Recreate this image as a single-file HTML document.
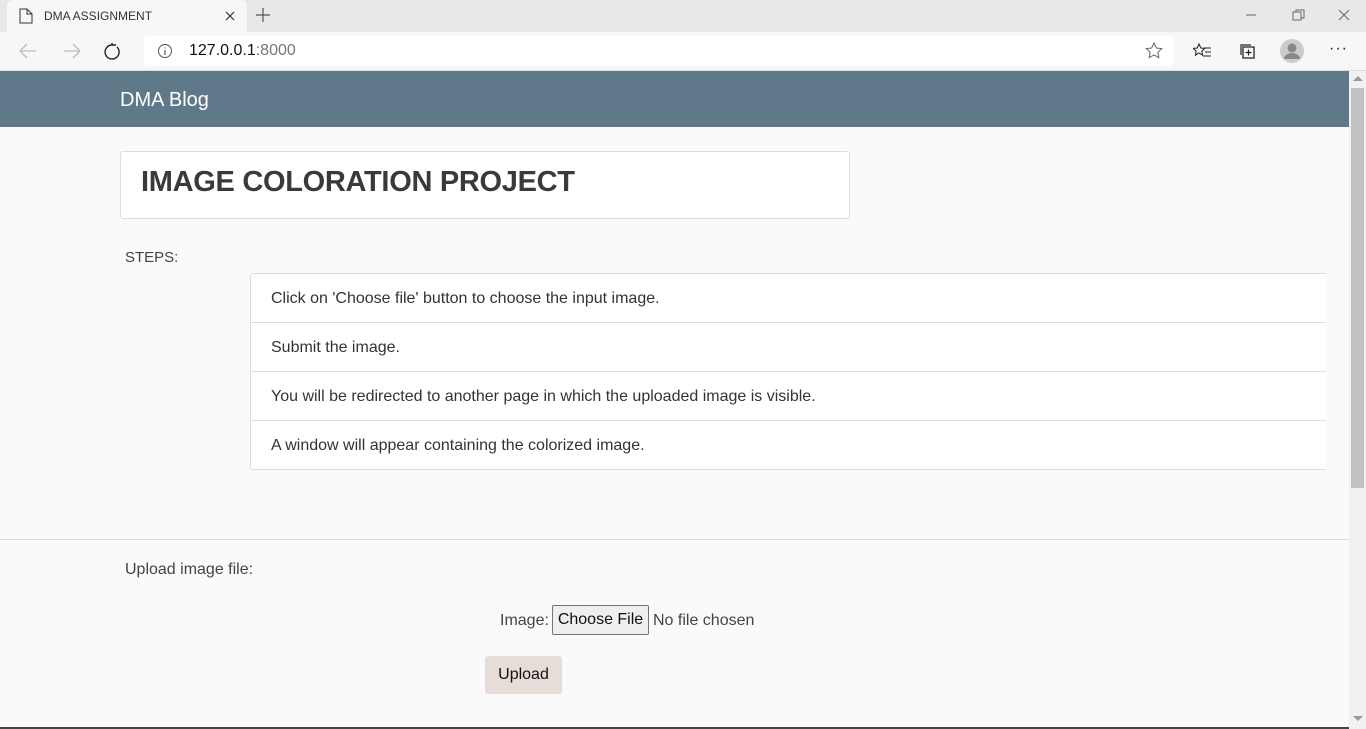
<!DOCTYPE html>
<html><head><meta charset="utf-8"><style>
*{box-sizing:border-box;margin:0;padding:0}
body{width:1366px;height:729px;overflow:hidden;background:#fafafa;font-family:"Liberation Sans",sans-serif;position:relative;color:#444}
.abs{position:absolute}
#tabbar{left:0;top:0;width:1366px;height:32px;background:#e8e8e8}
#tab{left:7px;top:0;width:240px;height:32px;background:#f7f7f7;border-radius:6px 6px 0 0}
#toolbar{left:0;top:32px;width:1366px;height:39px;background:#f7f7f7;border-bottom:1px solid #ddd}
#url{left:144px;top:36px;width:1030px;height:30px;background:#fff;border-radius:4px}
#nav{left:0;top:71px;width:1349px;height:56px;background:#5f788a}
#sb{left:1349px;top:71px;width:17px;height:658px;background:#f1f1f1}
#thumb{left:1351px;top:88px;width:13px;height:400px;background:#c1c1c1}
.t{font-size:16px}
#jumbo{left:120px;top:151px;width:730px;height:68px;background:#fff;border:1px solid #ddd;border-radius:3px}
#list{left:250px;top:273px;width:1076px;height:197px;background:#fff;border:1px solid #ddd;border-right:none;border-radius:3px 0 0 3px}
.li{height:49px;border-bottom:1px solid #ddd;padding-left:20px;line-height:50px;font-size:16px;color:#333}
.li:last-child{border-bottom:none}
</style></head><body>
<div id="tabbar" class="abs"></div>
<div id="tab" class="abs"></div>
<svg class="abs" style="left:19px;top:8px" width="14" height="16"><path d="M1 1h7l5 5v9H1z M8 1v5h5" fill="none" stroke="#333" stroke-width="1"/></svg>
<div class="abs" style="left:44px;top:9px;font-size:12px;color:#333">DMA ASSIGNMENT</div>
<svg class="abs" style="left:225px;top:11px" width="10" height="10"><path d="M1 1l8 8M9 1l-8 8" stroke="#333" stroke-width="1.2"/></svg>
<svg class="abs" style="left:256px;top:8px" width="14" height="14"><path d="M7 0v14M0 7h14" stroke="#555" stroke-width="1.2"/></svg>
<svg class="abs" style="left:1245px;top:9px" width="110" height="12"><path d="M1 6h10" stroke="#666"/><path d="M48 3h8v8h-8zM51 3v-2h8v8h-3" fill="none" stroke="#666"/><path d="M94 1l10 10M104 1l-10 10" stroke="#666"/></svg>
<div id="toolbar" class="abs"></div>
<svg class="abs" style="left:18px;top:42px" width="110" height="18"><path d="M2 9h16M2 9l7-7M2 9l7 7" fill="none" stroke="#bbb" stroke-width="1.3"/><path d="M46 9h16M62 9l-7-7M62 9l-7 7" fill="none" stroke="#bbb" stroke-width="1.3"/><path d="M94 3a7 7 0 1 0 5 2M94 3v-2M94 3h4" fill="none" stroke="#222" stroke-width="1.4"/></svg>
<div id="url" class="abs"></div>
<svg class="abs" style="left:157px;top:43px" width="16" height="16"><circle cx="8" cy="8" r="6.5" fill="none" stroke="#555"/><path d="M8 7v5M8 4.5v1" stroke="#555" stroke-width="1.2"/></svg>
<div class="abs" style="left:189px;top:42px;font-size:16px;color:#111">127.0.0.1<span style="color:#777">:8000</span></div>
<svg class="abs" style="left:1145px;top:42px" width="20" height="18"><path d="M9 1l2.4 5 5.4.6-4 3.7 1 5.4L9 13l-4.8 2.7 1-5.4-4-3.7 5.4-.6z" fill="none" stroke="#666"/></svg>
<svg class="abs" style="left:1193px;top:42px" width="20" height="18"><path d="M6 2l1.8 4 4 .4-3 2.8.8 4L6 11 2.4 13.2l.8-4-3-2.8 4-.4z" fill="none" stroke="#222"/><path d="M11 6h7M12 10h6M10 14h8" stroke="#222"/></svg>
<svg class="abs" style="left:1238px;top:42px" width="18" height="18"><path d="M5 5h11v11H5z" fill="none" stroke="#222" stroke-width="1.3"/><path d="M10.5 7.5v6M7.5 10.5h6M3 13V3h10" fill="none" stroke="#222" stroke-width="1.2"/></svg>
<svg class="abs" style="left:1280px;top:39px" width="24" height="24"><circle cx="12" cy="12" r="12" fill="#ccc"/><circle cx="12" cy="9" r="4.5" fill="#888"/><path d="M4 20a8 6 0 0 1 16 0z" fill="#888"/></svg>
<div class="abs" style="left:1329px;top:40px;font-size:16px;color:#222;letter-spacing:1px">···</div>
<div id="nav" class="abs"></div>
<div class="abs" style="left:120px;top:89px;font-size:20px;color:#fff">DMA Blog</div>
<div id="sb" class="abs"></div>
<div id="thumb" class="abs"></div>
<svg class="abs" style="left:1353px;top:75px" width="10" height="6"><path d="M0 6l5-5 5 5z" fill="#999"/></svg>
<svg class="abs" style="left:1353px;top:716px" width="10" height="6"><path d="M0 0l5 5 5-5z" fill="#999"/></svg>
<div id="jumbo" class="abs"></div>
<div class="abs" style="left:141px;top:166px;font-size:29px;color:#3a3a3a;font-weight:bold;letter-spacing:-0.3px">IMAGE COLORATION PROJECT</div>
<div class="abs" style="left:125px;top:249px;font-size:15px">STEPS:</div>
<div id="list" class="abs">
<div class="li">Click on 'Choose file' button to choose the input image.</div>
<div class="li">Submit the image.</div>
<div class="li">You will be redirected to another page in which the uploaded image is visible.</div>
<div class="li">A window will appear containing the colorized image.</div>
</div>
<div class="abs" style="left:0;top:539px;width:1349px;height:1px;background:#ddd"></div>
<div class="abs t" style="left:125px;top:561px">Upload image file:</div>
<div class="abs t" style="left:500px;top:612px">Image:</div>
<div class="abs" style="left:552px;top:605px;width:97px;height:30px;background:#efefef;border:1px solid #767676;border-radius:2px;font-size:16px;color:#111;text-align:center;line-height:28px">Choose File</div>
<div class="abs t" style="left:653px;top:612px">No file chosen</div>
<div class="abs" style="left:485px;top:656px;width:77px;height:38px;background:#e6ddd8;border-radius:3px;font-size:16px;color:#111;text-align:center;line-height:38px">Upload</div>
<div class="abs" style="left:0;top:727px;width:1349px;height:2px;background:#444"></div>
</body></html>
